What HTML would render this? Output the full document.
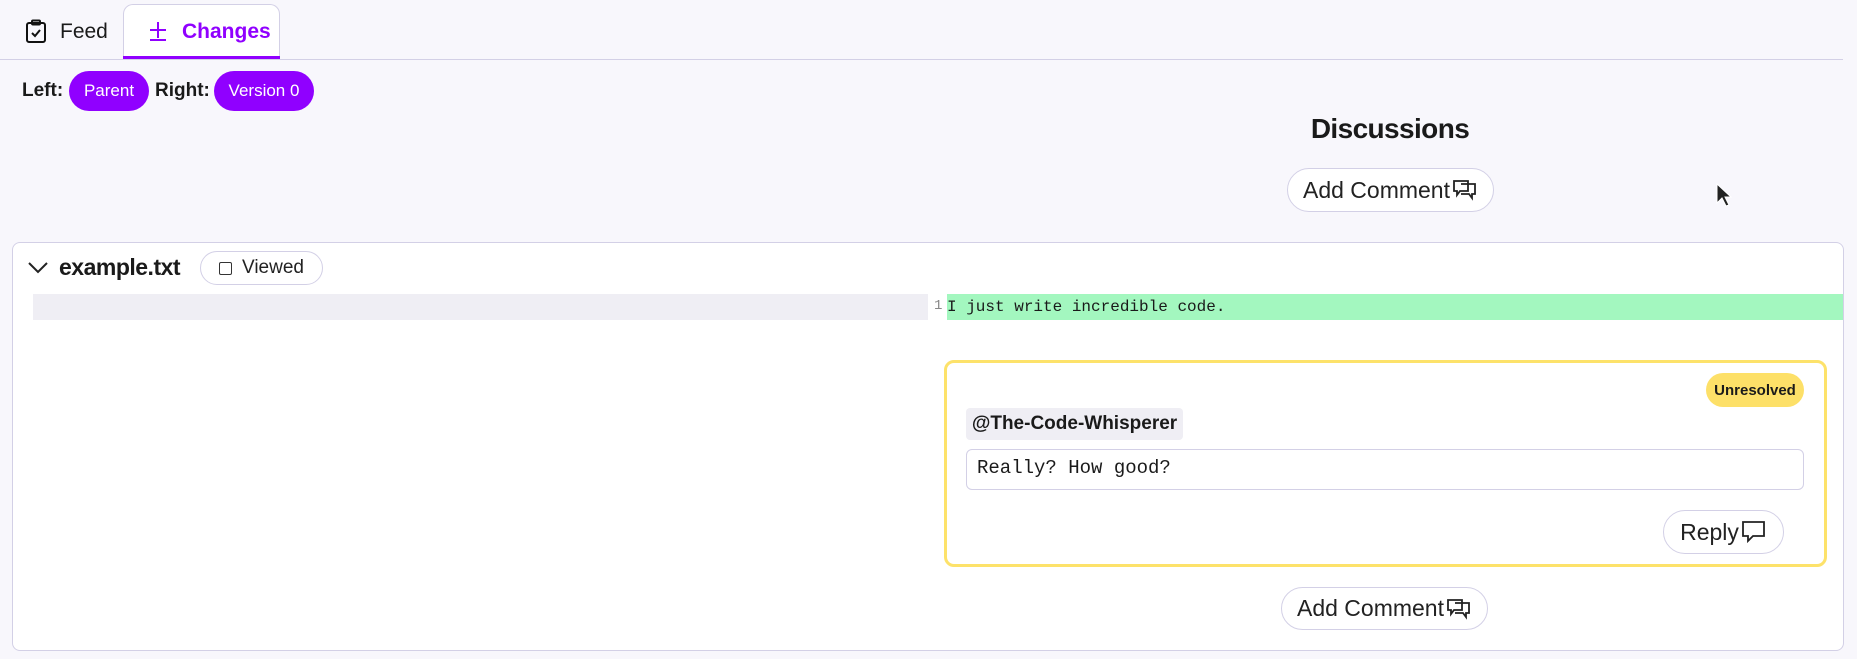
<!DOCTYPE html>
<html><head><meta charset="utf-8"><style>
*{box-sizing:border-box;margin:0;padding:0}
body{width:1857px;height:659px;background:#f8f7fc;font-family:"Liberation Sans",sans-serif;color:#1a1a1a;position:relative;overflow:hidden}
.a{position:absolute}
.pill{background:#9000ff;color:#fff;border-radius:22px;font-size:17px;display:flex;align-items:center;justify-content:center}
.btn{background:#fff;border:1px solid #d3d0e6;border-radius:24px;display:flex;align-items:center;justify-content:center;font-size:23px;color:#222}
.b{font-weight:bold}
.mono{font-family:"Liberation Mono","DejaVu Sans Mono",monospace}
</style></head><body>
<svg class="a" style="left:25px;top:19px" width="22" height="25" viewBox="0 0 22 25" fill="none" stroke="#111" stroke-width="2"><rect x="2" y="4" width="18" height="19" rx="2"/><rect x="7" y="1.5" width="8" height="4" rx="1"/><path d="M7 14l3 3 5-6"/></svg>
<div class="a" style="left:60px;top:20px;font-size:21px">Feed</div>
<div class="a" style="left:123px;top:4px;width:157px;height:55px;border:1px solid #d3d0e6;border-bottom:none;border-radius:10px 10px 0 0;background:#fff"></div>
<div class="a" style="left:123px;top:56px;width:157px;height:3px;background:#9000ff"></div>
<svg class="a" style="left:148px;top:20px" width="20" height="22" viewBox="0 0 20 22" stroke="#9000ff" stroke-width="2"><path d="M2 10h16M10 2v16M2 20h16"/></svg>
<div class="a b" style="left:182px;top:20px;font-size:21px;color:#9000ff">Changes</div>
<div class="a" style="left:0;top:59px;width:1843px;height:1px;background:#d3d0e6"></div>
<div class="a b" style="left:22px;top:80px;font-size:19px">Left:</div>
<div class="a pill" style="left:69px;top:71px;width:80px;height:40px">Parent</div>
<div class="a b" style="left:155px;top:80px;font-size:19px">Right:</div>
<div class="a pill" style="left:214px;top:71px;width:100px;height:40px">Version 0</div>
<div class="a b" style="left:1290px;top:113px;width:200px;text-align:center;font-size:28px;letter-spacing:-0.6px">Discussions</div>
<div class="a btn" style="left:1287px;top:168px;width:207px;height:44px">Add Comment<svg width="26" height="24" viewBox="0 0 26 24" fill="none" stroke="#222" stroke-width="1.8" style="margin-left:2px"><path d="M2 3h14v10H8l-3 4v-4H2z"/><path d="M9 6h14v10h-3v4l-3-4H9"/></svg></div>
<svg class="a" style="left:1716px;top:183px" width="16" height="24" viewBox="0 0 16 24"><path d="M1 1v19l5-5 4 8 3-1-4-8h6z" fill="#222" stroke="#fff" stroke-width="1"/></svg>
<div class="a" style="left:12px;top:242px;width:1832px;height:409px;background:#fff;border:1px solid #d3d0e6;border-radius:8px"></div>
<svg class="a" style="left:28px;top:262px" width="20" height="12" viewBox="0 0 20 12" fill="none" stroke="#222" stroke-width="2"><path d="M1 1l9 9 9-9"/></svg>
<div class="a b" style="left:59px;top:254px;font-size:23px;letter-spacing:-0.5px">example.txt</div>
<div class="a btn" style="left:200px;top:251px;width:123px;height:34px;font-size:19px"><span style="display:inline-block;width:13px;height:13px;border:1.5px solid #333;border-radius:2px;margin-right:10px"></span>Viewed</div>
<div class="a" style="left:33px;top:294px;width:895px;height:26px;background:#efeef4"></div>
<div class="a mono" style="left:934px;top:298px;font-size:14px;color:#888">1</div>
<div class="a mono" style="left:947px;top:294px;width:896px;height:26px;background:#a3f7bf;font-size:16px;line-height:26px">I just write incredible code.</div>
<div class="a" style="left:944px;top:360px;width:883px;height:207px;border:3px solid #fde26a;border-radius:10px;background:#fff"></div>
<div class="a b" style="left:1706px;top:373px;width:98px;height:34px;background:#fde068;border-radius:17px;font-size:15px;display:flex;align-items:center;justify-content:center">Unresolved</div>
<div class="a b" style="left:966px;top:408px;width:217px;height:32px;background:#efeef4;border-radius:4px;font-size:19px;display:flex;align-items:center;justify-content:center">@The-Code-Whisperer</div>
<div class="a mono" style="left:966px;top:449px;width:838px;height:41px;border:1px solid #d3d0e6;border-radius:6px;font-size:19px;padding:7px 10px">Really? How good?</div>
<div class="a btn" style="left:1663px;top:510px;width:121px;height:44px">Reply<svg width="26" height="26" viewBox="0 0 26 26" fill="none" stroke="#222" stroke-width="1.8" style="margin-left:2px"><path d="M2 3h21v14H12l-5 5v-5H2z"/></svg></div>
<div class="a btn" style="left:1281px;top:587px;width:207px;height:43px">Add Comment<svg width="26" height="24" viewBox="0 0 26 24" fill="none" stroke="#222" stroke-width="1.8" style="margin-left:2px"><path d="M2 3h14v10H8l-3 4v-4H2z"/><path d="M9 6h14v10h-3v4l-3-4H9"/></svg></div>
</body></html>
